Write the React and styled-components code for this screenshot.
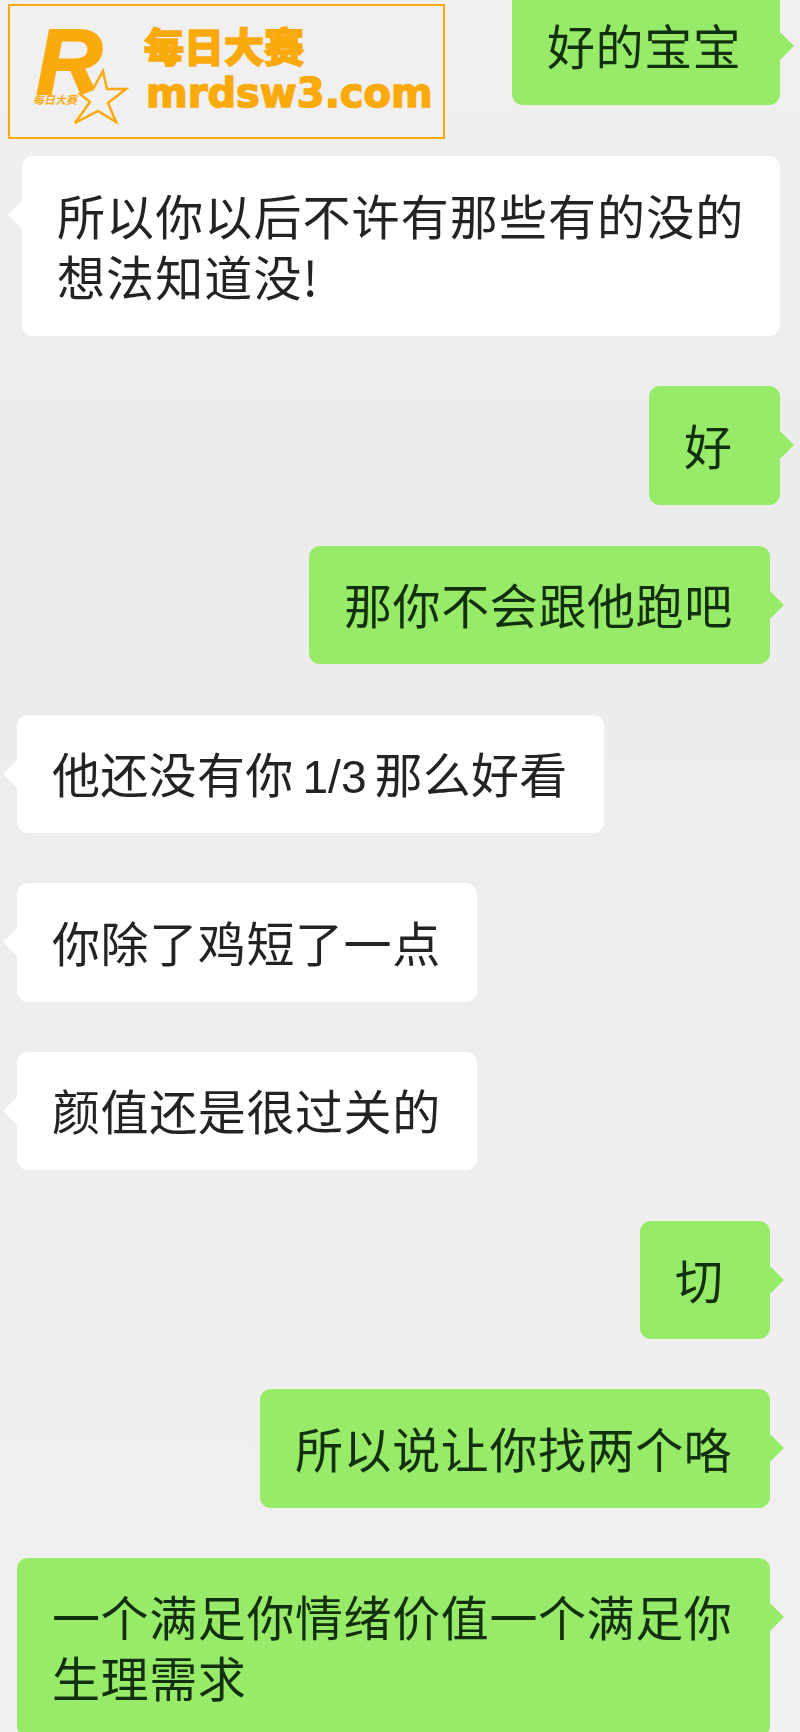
import React from 'react';
import styled, { createGlobalStyle } from 'styled-components';

const GlobalStyle = createGlobalStyle`
  html, body {
    margin: 0;
    padding: 0;
    background: #eeeeee;
  }
`;

const ORANGE = '#fbaa0d';
const FONT = '"Noto Sans CJK SC", "Noto Sans", sans-serif';

const Page = styled.div`
  position: relative;
  width: 800px;
  height: 1732px;
  overflow: hidden;
  background: linear-gradient(#f0f0f0, #ececec 30%, #eeeeee 60%, #f0f0f0);
  font-family: ${FONT};
`;

const Chat = styled.div`
  display: flex;
  flex-direction: column;
  gap: 50.3px;
  margin-top: -13px;
`;

const Row = styled.div`
  display: flex;
  justify-content: ${(p) => (p.$me ? 'flex-end' : 'flex-start')};
  padding: 0 ${(p) => p.$right}px 0 ${(p) => p.$left}px;
  margin-top: ${(p) => p.$pull || 0}px;
`;

const Bubble = styled.div`
  position: relative;
  box-sizing: border-box;
  width: ${(p) => p.$width}px;
  padding: ${(p) => 27.2 + (p.$extra || 0)}px 35px 30.2px;
  border-radius: 11px;
  background: ${(p) => (p.$me ? '#98ea69' : '#ffffff')};
  color: ${(p) => (p.$me ? '#12300e' : '#232323')};
  font-size: 48px;
  line-height: 61px;
  letter-spacing: ${(p) => p.$spacing ?? 0.6}px;
  filter: blur(0.4px);

  /* the tail stays level with the first line, also on two-line bubbles */
  &::after {
    content: '';
    position: absolute;
    top: 45px;
    ${(p) => (p.$me ? 'right: -14px' : 'left: -14px')};
    border-style: solid;
    border-width: 14px ${(p) => (p.$me ? '0 14px 14px' : '14px 14px 0')};
    border-color: transparent
      ${(p) => (p.$me ? 'transparent' : '#ffffff')} transparent
      ${(p) => (p.$me ? '#98ea69' : 'transparent')};
  }
`;

const Digits = styled.span`
  font-family: "Liberation Sans", Arial, sans-serif;
  font-size: 46px;
  line-height: 1;
  margin: 0 8px 0 9px;
  letter-spacing: 0;
`;

const Ad = styled.div`
  position: absolute;
  top: 4px;
  left: 8px;
  box-sizing: border-box;
  width: 437px;
  height: 135px;
  display: flex;
  gap: 23px;
  padding: 18px 0 0 26px;
  border: 2.5px solid ${ORANGE};
  background: #f0f0f0;
  color: ${ORANGE};
`;

const Badge = styled.div`
  position: relative;
  width: 85px;
  height: 100px;
  flex: none;
`;

const BadgeLetter = styled.div`
  font-family: "Liberation Sans", Arial, sans-serif;
  font-size: 92px;
  font-weight: 700;
  font-style: italic;
  line-height: 76px;
  margin-left: 0;
  -webkit-text-stroke: 2px ${ORANGE};
`;

const BadgeCaption = styled.div`
  position: absolute;
  left: -3px;
  top: 68px;
  font-size: 11px;
  font-weight: 700;
  font-style: italic;
  line-height: 14px;
  white-space: nowrap;
`;

const BadgeStar = styled.svg`
  position: absolute;
  left: -3px;
  top: -1px;
  overflow: visible;
`;

const AdText = styled.div`
  display: flex;
  flex-direction: column;
`;

const AdTitle = styled.div`
  font-size: 40px;
  font-weight: 900;
  line-height: 42px;
  letter-spacing: 0;
  -webkit-text-stroke: 1.6px ${ORANGE};
`;

const AdUrl = styled.div`
  font-family: "DejaVu Sans", sans-serif;
  font-size: 40px;
  font-weight: 700;
  line-height: 44px;
  letter-spacing: 0;
  margin-left: 2px;
  margin-top: 5px;
  -webkit-text-stroke: 1.5px ${ORANGE};
`;

const messages = [
  { id: 'a', text: '好的宝宝', me: true, width: 268, right: 20 },
  { id: 'b', text: '所以你以后不许有那些有的没的想法知道没!', width: 758, right: 20, left: 22, spacing: 1.1, extra: 1 },
  { id: 'c', text: '好', me: true, width: 131, right: 20 },
  { id: 'd', text: '那你不会跟他跑吧', me: true, width: 461, right: 30, pull: -9 },
  { id: 'e', text: <>他还没有你<Digits>1/3</Digits>那么好看</>, width: 587, left: 17, spacing: 0.3 },
  { id: 'f', text: '你除了鸡短了一点', width: 460, left: 17 },
  { id: 'g', text: '颜值还是很过关的', width: 460, left: 17 },
  { id: 'h', text: '切', me: true, width: 130, right: 30 },
  { id: 'i', text: '所以说让你找两个咯', me: true, width: 510, right: 30 },
  { id: 'j', text: '一个满足你情绪价值一个满足你生理需求', me: true, width: 753, right: 30, left: 17 },
];

const App = () => {
  return (
    <>
      <GlobalStyle />
      <Page>
        <Chat>
          {messages.map((m) => (
            <Row key={m.id} $me={m.me} $left={m.left || 0} $right={m.right || 0} $pull={m.pull}>
              <Bubble $me={m.me} $width={m.width} $spacing={m.spacing} $extra={m.extra}>
                {m.text}
              </Bubble>
            </Row>
          ))}
        </Chat>
        <Ad>
          <Badge>
            <BadgeLetter>R</BadgeLetter>
            <BadgeCaption>每日大赛</BadgeCaption>
            <BadgeStar width="85" height="100" viewBox="0 0 85 100">
              <path
                d="M70 48 L60 66 L47 71 L57 79 L42 100 L65 88 L83 99 L75 80 L93 66 L74 66 Z"
                fill="#f0f0f0"
                stroke={ORANGE}
                strokeWidth="2.5"
              />
            </BadgeStar>
          </Badge>
          <AdText>
            <AdTitle>每日大赛</AdTitle>
            <AdUrl>mrdsw3.com</AdUrl>
          </AdText>
        </Ad>
      </Page>
    </>
  );
};

export default App;
